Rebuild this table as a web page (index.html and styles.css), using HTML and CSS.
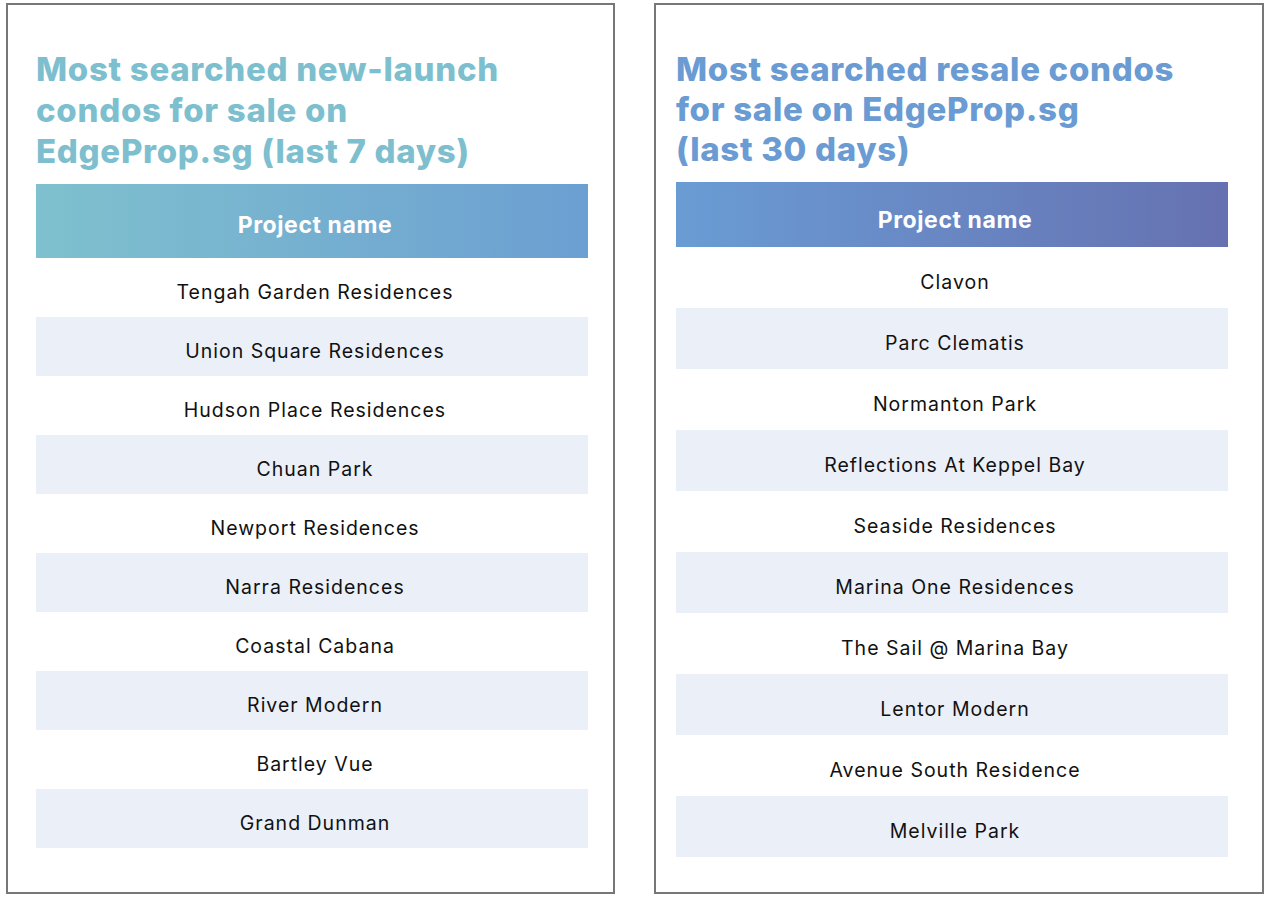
FILE: index.html
```html
<!DOCTYPE html>
<html lang="en">
<head>
<meta charset="utf-8">
<title>Most searched condos on EdgeProp.sg</title>
<link rel="stylesheet" href="styles.css">
</head>
<body>
<main class="page">
  <section class="card card-new">
    <h2 class="title">Most searched new-launch<br>condos for sale on<br>EdgeProp.sg (last 7 days)</h2>
    <div class="table">
      <div class="head">Project name</div>
      <div class="row">Tengah Garden Residences</div>
      <div class="row">Union Square Residences</div>
      <div class="row">Hudson Place Residences</div>
      <div class="row">Chuan Park</div>
      <div class="row">Newport Residences</div>
      <div class="row">Narra Residences</div>
      <div class="row">Coastal Cabana</div>
      <div class="row">River Modern</div>
      <div class="row">Bartley Vue</div>
      <div class="row">Grand Dunman</div>
    </div>
  </section>
  <section class="card card-resale">
    <h2 class="title">Most searched resale condos<br>for sale on EdgeProp.sg<br>(last 30 days)</h2>
    <div class="table">
      <div class="head">Project name</div>
      <div class="row">Clavon</div>
      <div class="row">Parc Clematis</div>
      <div class="row">Normanton Park</div>
      <div class="row">Reflections At Keppel Bay</div>
      <div class="row">Seaside Residences</div>
      <div class="row">Marina One Residences</div>
      <div class="row">The Sail @ Marina Bay</div>
      <div class="row">Lentor Modern</div>
      <div class="row">Avenue South Residence</div>
      <div class="row">Melville Park</div>
    </div>
  </section>
</main>
</body>
</html>
```
FILE: styles.css
```css
* { box-sizing: border-box; }
html, body { margin: 0; padding: 0; background: #ffffff; }
body { font-family: "Inter", "Open Sans", sans-serif; color: #111111; }

.page {
  display: flex;
  gap: 39px;
  padding: 3px 0 0 6px;
}

.card {
  height: 891px;
  border: 2px solid #777777;
  padding-top: 44px;
  display: flex;
  flex-direction: column;
}
.card-new { width: 609px; padding-left: 28px; }
.card-resale { width: 610px; padding-left: 20px; }

.title {
  margin: 0;
  font-size: 33px;
  font-weight: 800;
  letter-spacing: 0.7px;
}
.card-new .title { color: #7dbfce; line-height: 41px; margin-bottom: 12px; }
.card-resale .title { color: #6a9bd3; line-height: 40px; margin-bottom: 13px; }

.table { width: 552px; }

.head {
  display: flex;
  align-items: center;
  justify-content: center;
  color: #ffffff;
  font-size: 23px;
  font-weight: 700;
  letter-spacing: 0.6px;
  padding-left: 6px;
}
.card-new .head { height: 74px; padding-top: 8px; background: linear-gradient(90deg, #7fc1ce 0%, #6c9fd2 100%); }
.card-resale .head { height: 65px; padding-top: 10px; background: linear-gradient(90deg, #6a9cd4 0%, #6671b1 100%); }

.row {
  display: flex;
  align-items: center;
  justify-content: center;
  font-size: 19.5px;
  font-weight: 400;
  letter-spacing: 1px;
  color: #111111;
  padding: 9px 0 0 6px;
}
.card-new .row { height: 59px; }
.card-resale .row { height: 61px; }
.row:nth-child(odd) { background: #ebeff7; }
```
